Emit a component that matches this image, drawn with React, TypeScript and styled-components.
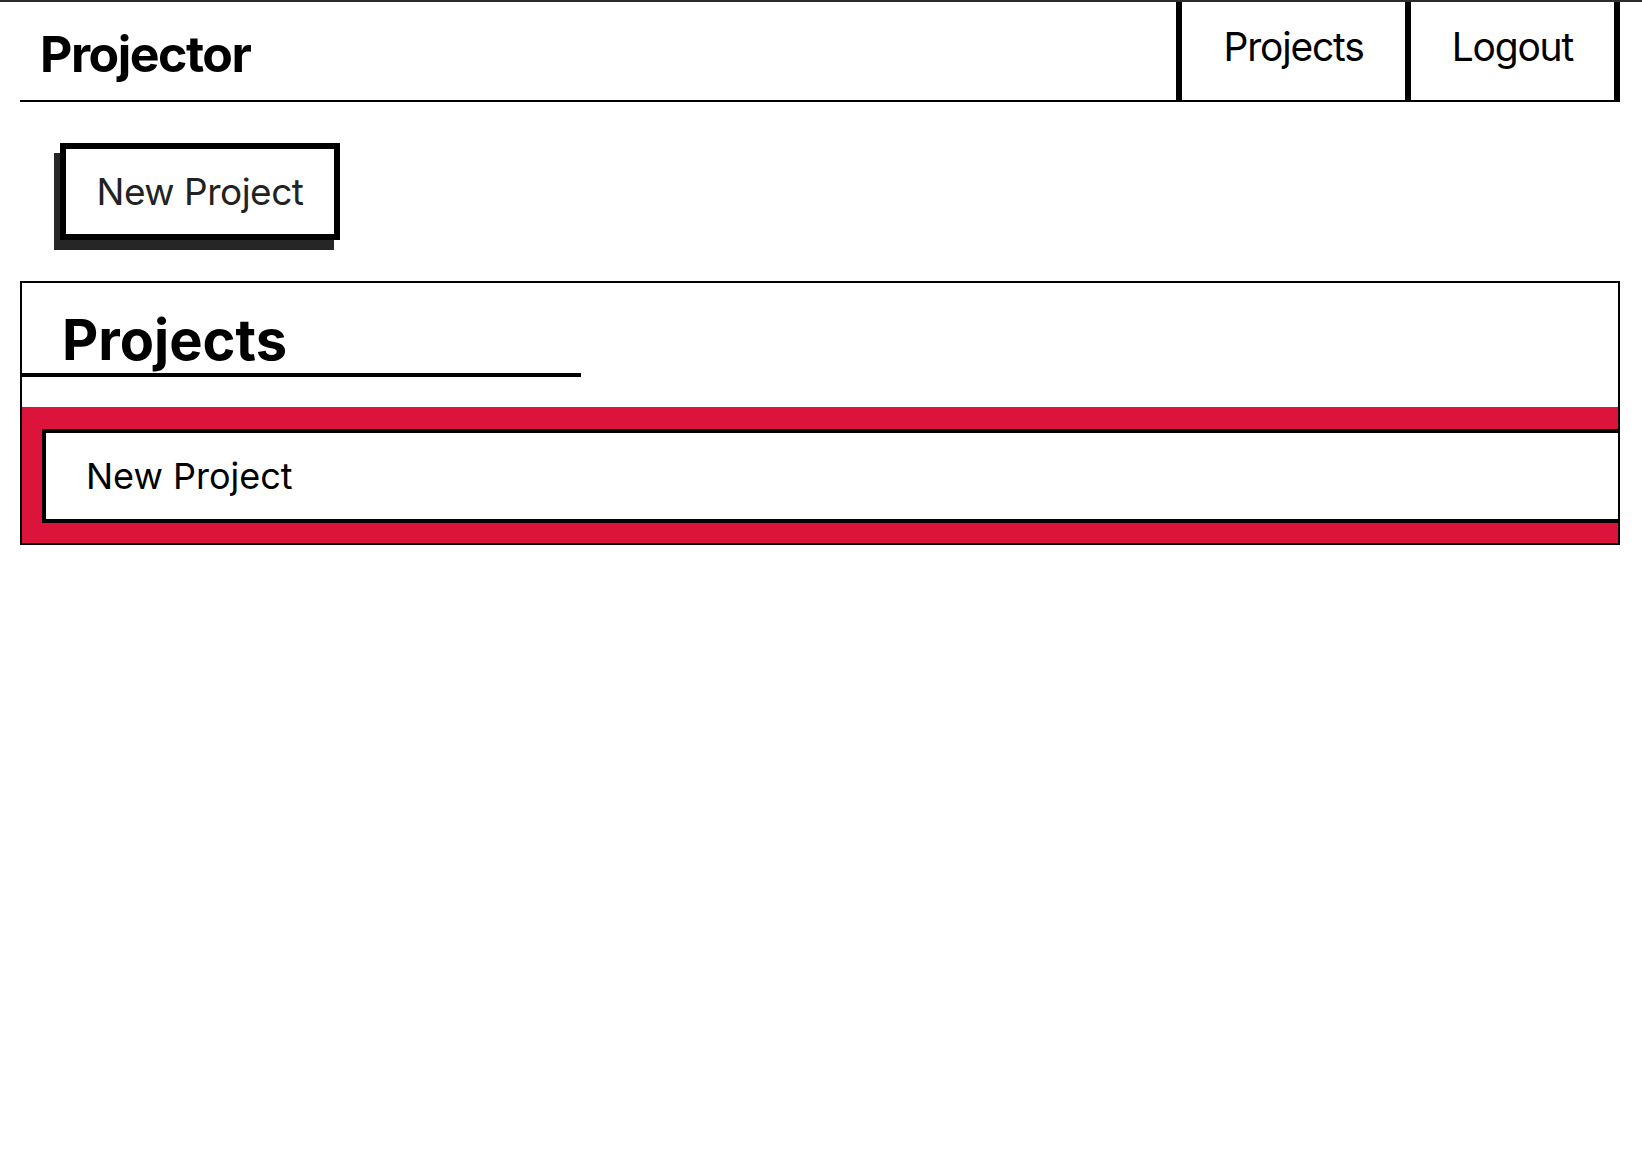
import React from "react";
import styled, { createGlobalStyle } from "styled-components";

const GlobalStyle = createGlobalStyle`
  body {
    margin: 0;
    background: #ffffff;
    font-family: "Inter", "Noto Sans", sans-serif;
    color: #000000;
  }
`;

const TopEdge = styled.div`
  height: 2px;
  background: #2b2b2b;
`;

const Header = styled.header`
  display: flex;
  align-items: stretch;
  height: 98px;
  margin: 0 22px 0 20px;
  border-bottom: 2px solid #000;
`;

const Logo = styled.h1`
  margin: 0;
  padding: 5px 0 0 20px;
  display: flex;
  align-items: center;
  font-size: 50px;
  font-weight: 700;
  letter-spacing: -1.5px;
`;

const Nav = styled.nav`
  display: flex;
  margin-left: auto;
`;

const NavButton = styled.a<{ $last?: boolean }>`
  display: flex;
  align-items: center;
  padding: 0 41px 9px;
  border-left: 6px solid #000;
  border-right: ${(p) => (p.$last ? "6px solid #000" : "none")};
  font-size: 39px;
  letter-spacing: -1.2px;
  color: #000;
  text-decoration: none;
  cursor: pointer;
`;

const Main = styled.main`
  padding: 0 22px 0 20px;
`;

const Toolbar = styled.div`
  padding: 41px 40px;
`;

const NewButton = styled.button`
  width: 280px;
  height: 97px;
  border: 6px solid #000;
  background: #fff;
  box-shadow: -6px 10px 0 #262626;
  font-family: inherit;
  font-size: 37px;
  letter-spacing: -0.5px;
  color: #222;
  cursor: pointer;
`;

const Section = styled.section`
  border: 2px solid #000;
  overflow: hidden;
`;

const Heading = styled.h2`
  width: 35%;
  margin: 0 0 30px;
  padding: 29px 0 5px 40px;
  box-sizing: border-box;
  border-bottom: 4px solid #000;
  font-size: 56px;
  font-weight: 700;
  line-height: 1;
`;

const List = styled.div`
  background: #dc143c;
  padding: 22px 0 20px 20px;
`;

const Card = styled.div`
  display: flex;
  align-items: center;
  height: 86px;
  padding-left: 40px;
  border: 4px solid #000;
  border-right: none;
  background: #fff;
  font-size: 36px;
`;

export default function App() {
  return (
    <>
      <GlobalStyle />
      <TopEdge />
      <Header>
        <Logo>Projector</Logo>
        <Nav>
          <NavButton>Projects</NavButton>
          <NavButton $last>Logout</NavButton>
        </Nav>
      </Header>
      <Main>
        <Toolbar>
          <NewButton>New Project</NewButton>
        </Toolbar>
        <Section>
          <Heading>Projects</Heading>
          <List>
            <Card>New Project</Card>
          </List>
        </Section>
      </Main>
    </>
  );
}
